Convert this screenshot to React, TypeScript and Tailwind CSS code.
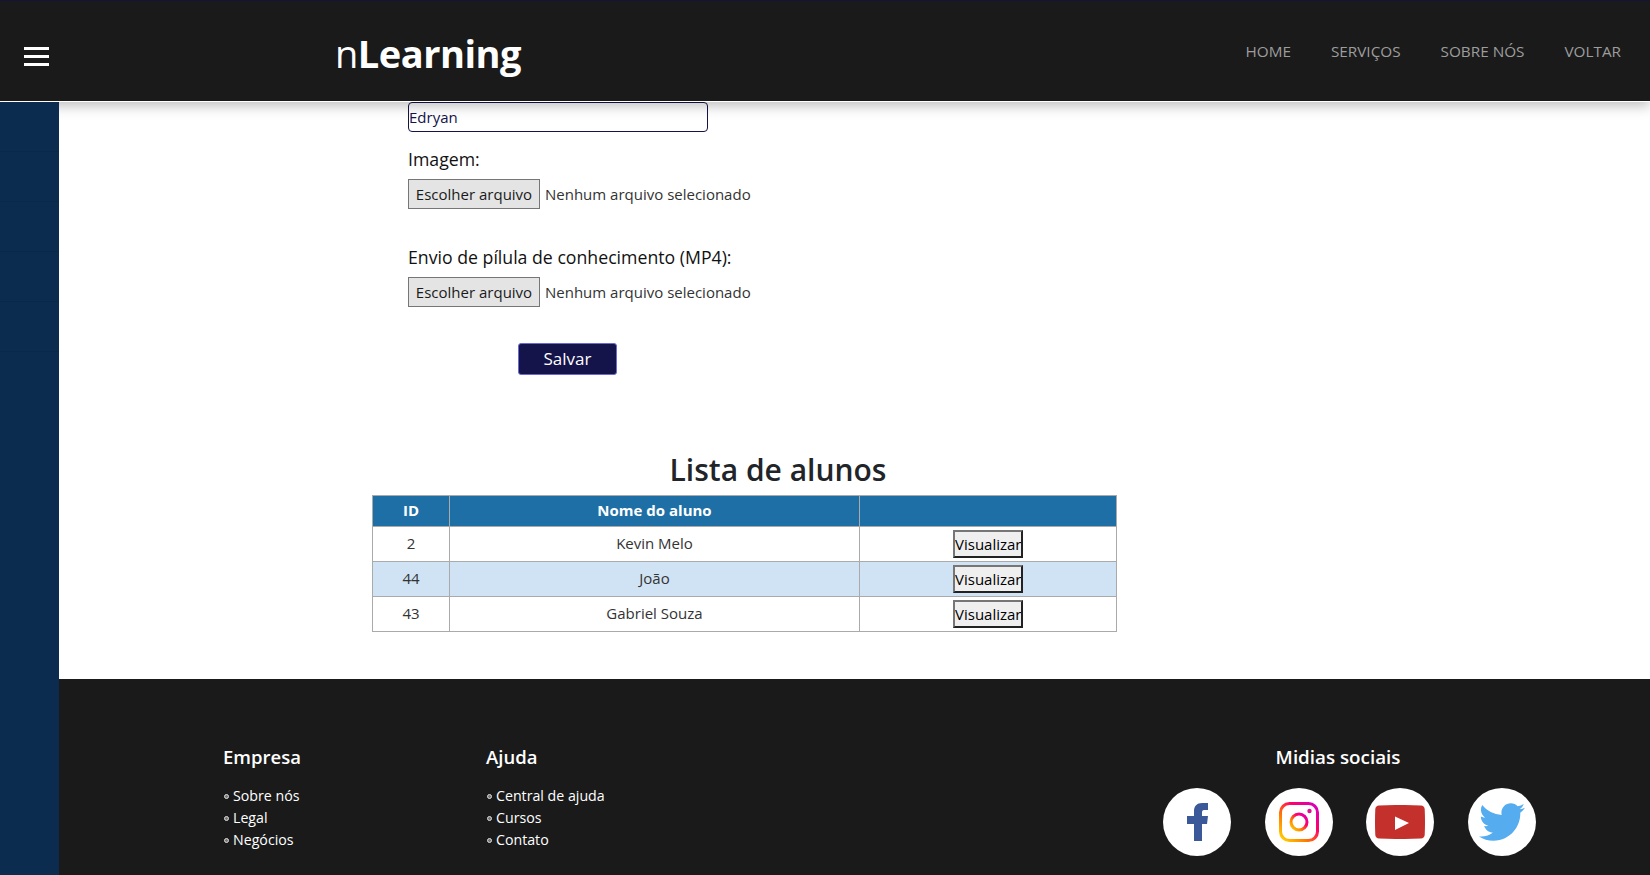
import React from 'react';
import { FaTwitter } from 'react-icons/fa';

const navLinks = ['HOME', 'SERVIÇOS', 'SOBRE NÓS', 'VOLTAR'];
const alunos = [
  { id: 2, nome: 'Kevin Melo' },
  { id: 44, nome: 'João' },
  { id: 43, nome: 'Gabriel Souza' },
];

function FileField() {
  return (
    <div className="flex items-center h-[30px]">
      <button className="w-[132px] h-[30px] border border-[#767676] bg-[#e4e4e4] text-[15px] text-[#1a1a1a]">Escolher arquivo</button>
      <span className="ml-[5px] text-[15px] text-[#333]">Nenhum arquivo selecionado</span>
    </div>
  );
}

function FooterList({ title, items, className }: { title: string; items: string[]; className: string }) {
  return (
    <div className={className}>
      <h4 className="text-[18.500px] leading-[24px] font-semibold text-white">{title}</h4>
      <ul className="mt-[16px]">
        {items.map((item) => (
          <li key={item} className="flex items-center h-[22px] text-[14.200px] text-white">
            <span className="w-[5px] h-[5px] rounded-full border border-[#ddd] bg-[#777] ml-[1px] mr-[4px]" />
            {item}
          </li>
        ))}
      </ul>
    </div>
  );
}

function Social({ children }: { children: React.ReactNode }) {
  return <a className="w-[68px] h-[68px] rounded-full bg-white flex items-center justify-center">{children}</a>;
}

export default function App() {
  return (
    <div className="h-[875px] overflow-hidden flex flex-col bg-white font-['Open_Sans','Noto_Sans',sans-serif]">
      {/* Header */}
      <header className="relative z-10 h-[102px] shrink-0 flex items-center bg-[#1a1a1a] border-t border-t-[#14143a] border-b border-b-white shadow-[0_4px_12px_rgba(0,0,0,0.25)]">
        <div className="ml-[24px] mt-[10px] w-[25px] flex flex-col gap-[5px]">
          <span className="h-[3px] bg-white" />
          <span className="h-[3px] bg-white" />
          <span className="h-[3px] bg-white" />
        </div>
        <div className="ml-[286px] mt-[3px] text-[38px] leading-[48px] font-bold text-white tracking-[-0.5px]">
          <span className="font-normal">n</span>Learning
        </div>
        <nav className="ml-auto mr-[29px] mt-[1px] flex gap-[40px]">
          {navLinks.map((link) => (
            <a key={link} className="text-[15.300px] text-[#9d9d9d]">{link}</a>
          ))}
        </nav>
      </header>

      <div className="flex flex-1 min-h-0">
        {/* Sidebar */}
        <aside className="relative z-20 w-[59px] shrink-0 bg-[#0b2c4e]">
          {[0, 1, 2, 3, 4].map((i) => (
            <div key={i} className="h-[50px] border-b border-b-[#0a294a]" />
          ))}
        </aside>

        <div className="flex-1 flex flex-col min-w-0">
          <main className="flex-1 min-h-0">
            <form className="pl-[349px]">
              <input
                readOnly
                value="Edryan"
                className="block w-[300px] h-[30px] border border-[#14144a] rounded-[4px] pl-0 text-[15px] text-[#14144a] outline-none"
              />
              <label className="block mt-[15px] h-[24px] leading-[24px] text-[17.700px] text-[#111]">Imagem:</label>
              <div className="mt-[8px]"><FileField /></div>
              <label className="block mt-[36px] h-[24px] leading-[24px] text-[17.700px] text-[#111]">Envio de pílula de conhecimento (MP4):</label>
              <div className="mt-[8px]"><FileField /></div>
              <button className="block ml-[110px] mt-[36px] w-[99px] h-[32px] rounded-[3px] border border-[#6a6ad0] bg-[#14144a] text-[17px] text-white">Salvar</button>
            </form>

            <h2 className="ml-[313px] w-[812px] mt-[73px] h-[44px] leading-[44px] text-center text-[30px] font-semibold text-[#212529]">Lista de alunos</h2>

            <table className="ml-[313px] mt-[3px] w-[745px] table-fixed border-collapse text-[15px] text-[#333]">
              <thead>
                <tr className="h-[31px] bg-[#1d6fa5] text-white">
                  <th className="w-[77px] pb-[2px] border border-[#aaa] font-bold">ID</th>
                  <th className="w-[410px] pb-[2px] border border-[#aaa] font-bold">Nome do aluno</th>
                  <th className="border border-[#aaa]" />
                </tr>
              </thead>
              <tbody>
                {alunos.map((a, i) => (
                  <tr key={a.id} className={i === 1 ? 'h-[35px] bg-[#d0e3f5]' : 'h-[35px] bg-white'}>
                    <td className="pb-[2px] border border-[#aaa] text-center">{a.id}</td>
                    <td className="pb-[2px] border border-[#aaa] text-center">{a.nome}</td>
                    <td className="border border-[#aaa] p-0 text-center">
                      <button className="w-[70px] h-[28px] align-middle overflow-hidden whitespace-nowrap border-2 border-t-[#767676] border-l-[#767676] border-r-[#222] border-b-[#222] bg-[#efefef] text-[15px] text-black">Visualizar</button>
                    </td>
                  </tr>
                ))}
              </tbody>
            </table>
          </main>

          {/* Footer */}
          <footer className="h-[196px] shrink-0 bg-[#1a1a1a] flex pl-[164px] pr-[114px] pt-[66px]">
            <FooterList className="w-[263px]" title="Empresa" items={['Sobre nós', 'Legal', 'Negócios']} />
            <FooterList className="w-[200px]" title="Ajuda" items={['Central de ajuda', 'Cursos', 'Contato']} />
            <div className="ml-auto w-[373px]">
              <h4 className="pr-[23px] text-center text-[18.800px] leading-[24px] font-semibold text-white">Midias sociais</h4>
              <div className="mt-[19px] flex justify-between">
                <Social>
                  <svg width="21" height="38" viewBox="0 0 21 38">
                    <path fill="#3b5998" d="M7 38V21H0v-8h7V8c0-5 3-8 8-8h6v7h-4c-1.500 0-2 1-2 2.500V13h6l-1 8h-5v17z" />
                  </svg>
                </Social>
                <Social>
                  <svg width="40" height="40" viewBox="0 0 40 40" fill="none">
                    <defs>
                      <linearGradient id="ig" x1="0" y1="1" x2="1" y2="0">
                        <stop offset="0" stopColor="#ffd600" />
                        <stop offset="0.35" stopColor="#ff7a00" />
                        <stop offset="0.65" stopColor="#ff0069" />
                        <stop offset="1" stopColor="#d300c5" />
                      </linearGradient>
                    </defs>
                    <rect x="1.500" y="1.500" width="37" height="37" rx="9" stroke="url(#ig)" strokeWidth="3" />
                    <circle cx="20" cy="20" r="8" stroke="url(#ig)" strokeWidth="3" />
                    <circle cx="30.500" cy="9" r="2.200" fill="#e0108f" />
                  </svg>
                </Social>
                <Social>
                  <svg width="50" height="34" viewBox="0 0 50 34">
                    <path fill="#c4302b" d="M4 .5C18-.2 32-.2 46 .5c2 .1 3.500 1.500 3.700 3.500.4 8.500.4 17.500 0 26-.2 2-1.700 3.400-3.700 3.500-14 .7-28 .7-42 0C2 33.400.5 32 .3 30-.1 21.500-.1 12.500.3 4 .5 2 2 .6 4 .5z" />
                    <path fill="#fff" d="M20 11.500L34 18 20 25z" />
                  </svg>
                </Social>
                <Social>
                  <FaTwitter className="w-[46px] h-[46px] text-[#55acee]" />
                </Social>
              </div>
            </div>
          </footer>
        </div>
      </div>
    </div>
  );
}
